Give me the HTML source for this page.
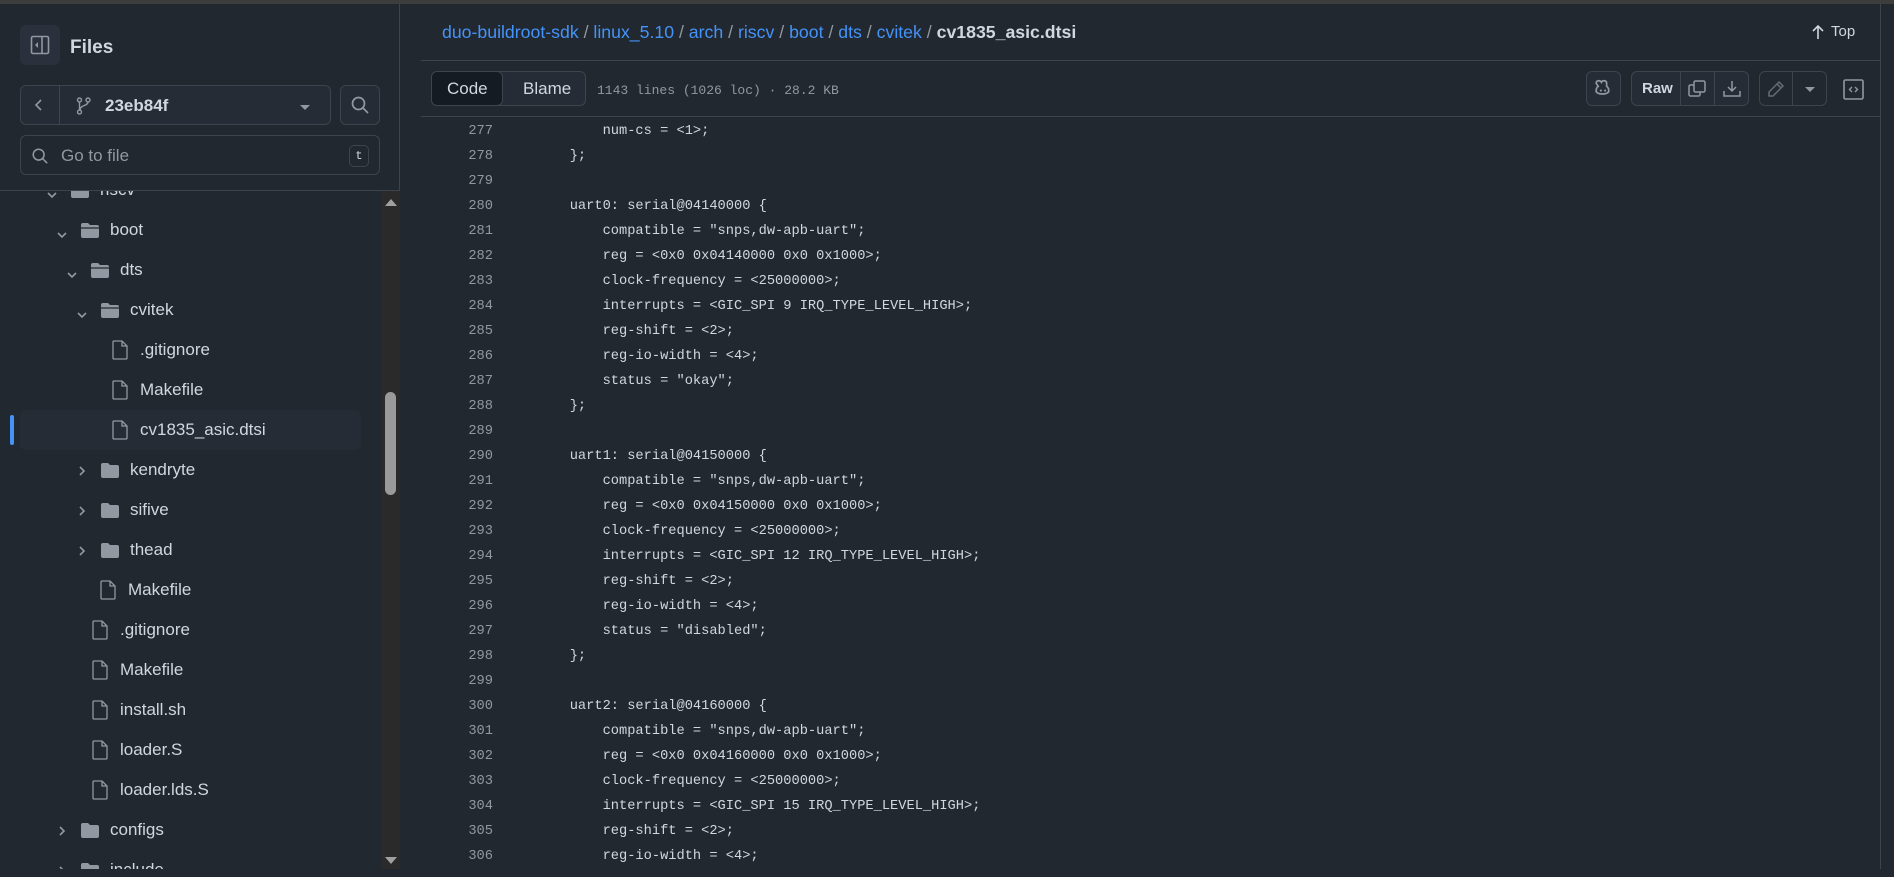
<!DOCTYPE html>
<html><head><meta charset="utf-8"><style>
*{box-sizing:border-box;margin:0;padding:0}
body{width:1894px;height:869px;overflow:hidden;background:#212830;font-family:"Liberation Sans",sans-serif;color:#d1d7e0;position:relative}
.topbar{position:absolute;left:0;top:0;width:1894px;height:4px;background:#3d3d3d}
.side{position:absolute;left:0;top:4px;width:400px;height:865px;background:#212830;border-right:1px solid #3d444d}
.abs{position:absolute}
.btn{position:absolute;border:1px solid #3d444d;border-radius:6px;background:#262c36}
.row{position:absolute;height:38px;font-size:17px;line-height:38px;color:#d1d7e0;white-space:nowrap}
.main{position:absolute;left:421px;top:4px;width:1459px;height:865px;background:#212830}
.code{position:absolute;left:0;font-family:"Liberation Mono",monospace;font-size:13.7px;white-space:pre;color:#d1d7e0}
.ln{position:absolute;width:72px;text-align:right;color:#9198a1;left:0}
.tx{position:absolute;left:83px}
.right{position:absolute;left:1880px;top:4px;width:14px;height:865px;background:#212830;border-left:1px solid #3d444d}
</style></head><body>
<div class="topbar"></div>
<div class="side">
 <div class="btn" style="left:20px;top:21px;width:40px;height:40px;border:none;background:#2a313c"></div>
 <svg class="abs" style="left:30px;top:31px" width="20" height="20" viewBox="0 0 20 20"><rect x="1.5" y="1.5" width="17" height="17" rx="1.5" fill="none" stroke="#9198a1" stroke-width="1.6"/><line x1="12" y1="2" x2="12" y2="18" stroke="#9198a1" stroke-width="1.6"/><path d="M8 7l-3 3 3 3z" fill="#9198a1"/></svg>
 <div class="abs" style="left:70px;top:33px;font-size:19px;font-weight:bold;color:#d1d7e0">Files</div>
 <div class="btn" style="left:20px;top:81px;width:311px;height:40px"></div>
 <div class="abs" style="left:59px;top:82px;width:1px;height:38px;background:#3d444d"></div>
 <svg class="abs" style="left:33px;top:94px" width="12" height="14" viewBox="0 0 12 14"><path d="M8 2L3 7l5 5" fill="none" stroke="#9198a1" stroke-width="1.6"/></svg>
 <svg class="abs" style="left:76px;top:93px" width="16" height="18" viewBox="0 0 16 18"><circle cx="3.5" cy="3" r="2" fill="none" stroke="#9198a1" stroke-width="1.4"/><circle cx="3.5" cy="15" r="2" fill="none" stroke="#9198a1" stroke-width="1.4"/><circle cx="12" cy="3" r="2" fill="none" stroke="#9198a1" stroke-width="1.4"/><path d="M3.5 5v8M12 5c0 4-8 3-8 8" fill="none" stroke="#9198a1" stroke-width="1.4"/></svg>
 <div class="abs" style="left:105px;top:92px;font-size:17px;font-weight:bold;color:#d1d7e0">23eb84f</div>
 <svg class="abs" style="left:299px;top:100px" width="12" height="8"><path d="M1 1h10L6 6z" fill="#9198a1"/></svg>
 <div class="btn" style="left:340px;top:81px;width:40px;height:40px"></div>
 <svg class="abs" style="left:350px;top:91px" width="20" height="20" viewBox="0 0 20 20"><circle cx="8.5" cy="8.5" r="6" fill="none" stroke="#9198a1" stroke-width="1.7"/><path d="M13 13l5 5" stroke="#9198a1" stroke-width="1.7"/></svg>
 <div class="btn" style="left:20px;top:131px;width:360px;height:40px;background:#212830"></div>
 <svg class="abs" style="left:31px;top:143px" width="18" height="18" viewBox="0 0 20 20"><circle cx="8.5" cy="8.5" r="6" fill="none" stroke="#9198a1" stroke-width="1.7"/><path d="M13 13l5 5" stroke="#9198a1" stroke-width="1.7"/></svg>
 <div class="abs" style="left:61px;top:142px;font-size:17px;color:#9198a1">Go to file</div>
 <div class="abs" style="left:349px;top:141px;width:20px;height:22px;border:1px solid #3d444d;border-radius:5px;font-family:'Liberation Mono',monospace;font-size:12px;text-align:center;line-height:20px;color:#d1d7e0">t</div>
 <div class="abs" style="left:0;top:186px;width:400px;height:1px;background:#3d444d"></div>
 <div class="abs" style="left:0;top:187px;width:381px;height:678px;overflow:hidden" id="tree"></div>
 <div class="abs" style="left:381px;top:187px;width:19px;height:678px;background:#2a2a2a"></div>
 <svg class="abs" style="left:384px;top:193px" width="14" height="10"><path d="M1 9h12L7 2z" fill="#a0a0a0"/></svg>
 <svg class="abs" style="left:384px;top:852px" width="14" height="10"><path d="M1 1h12L7 8z" fill="#a0a0a0"/></svg>
 <div class="abs" style="left:385px;top:388px;width:11px;height:103px;border-radius:6px;background:#9a9a9a"></div>
</div>
<div class="main">
 <div class="abs" style="left:21px;top:18px;font-size:17.7px;color:#4493f8;white-space:nowrap">duo-buildroot-sdk <span style="color:#9198a1">/</span> linux_5.10 <span style="color:#9198a1">/</span> arch <span style="color:#9198a1">/</span> riscv <span style="color:#9198a1">/</span> boot <span style="color:#9198a1">/</span> dts <span style="color:#9198a1">/</span> cvitek <span style="color:#9198a1">/</span> <b style="color:#d1d7e0">cv1835_asic.dtsi</b></div>
 <svg class="abs" style="left:1390px;top:20px" width="14" height="16" viewBox="0 0 14 16"><path d="M7 15V2M2 7l5-5 5 5" fill="none" stroke="#d1d7e0" stroke-width="1.6"/></svg>
 <div class="abs" style="left:1410px;top:19px;font-size:15px;color:#d1d7e0">Top</div>
 <div class="abs" style="left:0;top:56px;width:1459px;height:1px;background:#3d444d"></div>
 <div class="abs" style="left:10px;top:67px;width:155px;height:35px;border:1px solid #3d444d;border-radius:6px;background:#262c36"></div>
 <div class="abs" style="left:10px;top:67px;width:72px;height:35px;border-radius:6px;background:#151b23;border:1px solid #3d444d"></div>
 <div class="abs" style="left:26px;top:75px;font-size:17px;color:#d1d7e0">Code</div>
 <div class="abs" style="left:102px;top:75px;font-size:17px;color:#d1d7e0">Blame</div>
 <div class="abs" style="left:176px;top:79px;font-family:'Liberation Mono',monospace;font-size:13px;color:#9198a1">1143 lines (1026 loc) · 28.2 KB</div>
 <div class="btn" style="left:1165px;top:67px;width:35px;height:35px"></div>
 <svg class="abs" style="left:1172px;top:74px" width="21" height="21" viewBox="0 0 20 20"><path d="M4 5c0-3 4-3 5-1 1-2 5-2 5 1v3c2 1 2 3 2 5-2 3-10 3-12 0 0-2 0-4 2-5z" fill="none" stroke="#9198a1" stroke-width="1.6" transform="translate(-1 0)"/><circle cx="7.5" cy="12" r="1" fill="#9198a1"/><circle cx="11.5" cy="12" r="1" fill="#9198a1"/></svg>
 <div class="btn" style="left:1210px;top:67px;width:118px;height:35px"></div>
 <div class="abs" style="left:1259px;top:68px;width:1px;height:33px;background:#3d444d"></div>
 <div class="abs" style="left:1293px;top:68px;width:1px;height:33px;background:#3d444d"></div>
 <div class="abs" style="left:1221px;top:76px;font-size:15px;font-weight:bold;color:#d1d7e0">Raw</div>
 <svg class="abs" style="left:1267px;top:76px" width="18" height="18" viewBox="0 0 18 18"><rect x="1" y="5" width="11" height="11" rx="1.5" fill="none" stroke="#9198a1" stroke-width="1.5"/><rect x="6" y="1" width="11" height="11" rx="1.5" fill="#262c36" stroke="#9198a1" stroke-width="1.5"/></svg>
 <svg class="abs" style="left:1302px;top:76px" width="18" height="18" viewBox="0 0 18 18"><path d="M9 1v10M5 7l4 4 4-4M1 11v5h16v-5" fill="none" stroke="#9198a1" stroke-width="1.5"/></svg>
 <div class="btn" style="left:1338px;top:67px;width:68px;height:35px;background:#212830"></div>
 <div class="abs" style="left:1371px;top:68px;width:1px;height:33px;background:#3d444d"></div>
 <svg class="abs" style="left:1346px;top:76px" width="18" height="18" viewBox="0 0 18 18"><path d="M12 2l4 4-10 10H2v-4z M10 4l4 4" fill="none" stroke="#656c76" stroke-width="1.5"/></svg>
 <svg class="abs" style="left:1383px;top:82px" width="12" height="8"><path d="M1 1h10L6 6z" fill="#9198a1"/></svg>
 <svg class="abs" style="left:1422px;top:75px" width="21" height="21" viewBox="0 0 21 21"><rect x="1" y="1" width="19" height="19" rx="1.5" fill="none" stroke="#9198a1" stroke-width="1.6"/><path d="M9 8l-2.5 2.5L9 13M12 8l2.5 2.5L12 13" fill="none" stroke="#9198a1" stroke-width="1.4"/></svg>
 <div class="abs" style="left:0;top:112px;width:1459px;height:1px;background:#3d444d"></div>
 <div class="code" id="code" style="top:113px;width:1459px;height:760px"></div>
</div>
<div class="right"></div>
<script>
var lines=[
"            num-cs = <1>;","        };","","        uart0: serial@04140000 {",
"            compatible = \"snps,dw-apb-uart\";","            reg = <0x0 0x04140000 0x0 0x1000>;","            clock-frequency = <25000000>;","            interrupts = <GIC_SPI 9 IRQ_TYPE_LEVEL_HIGH>;","            reg-shift = <2>;","            reg-io-width = <4>;","            status = \"okay\";","        };","",
"        uart1: serial@04150000 {",
"            compatible = \"snps,dw-apb-uart\";","            reg = <0x0 0x04150000 0x0 0x1000>;","            clock-frequency = <25000000>;","            interrupts = <GIC_SPI 12 IRQ_TYPE_LEVEL_HIGH>;","            reg-shift = <2>;","            reg-io-width = <4>;","            status = \"disabled\";","        };","",
"        uart2: serial@04160000 {",
"            compatible = \"snps,dw-apb-uart\";","            reg = <0x0 0x04160000 0x0 0x1000>;","            clock-frequency = <25000000>;","            interrupts = <GIC_SPI 15 IRQ_TYPE_LEVEL_HIGH>;","            reg-shift = <2>;","            reg-io-width = <4>;"];
var h="";
lines.forEach(function(l,i){var y=7+i*25;h+='<div class="ln" style="top:'+y+'px">'+(277+i)+'</div><div class="tx" style="top:'+y+'px">'+l.replace(/&/g,'&amp;').replace(/</g,'&lt;').replace(/>/g,'&gt;')+'</div>';});
document.getElementById('code').innerHTML=h;
var folder='<svg width="20" height="17" viewBox="0 0 20 17"><path d="M1 3a2 2 0 0 1 2-2h5l2 2h7a2 2 0 0 1 2 2v9a2 2 0 0 1-2 2H3a2 2 0 0 1-2-2z" fill="#9198a1"/></svg>';
var open='<svg width="20" height="17" viewBox="0 0 20 17"><path d="M1 3a2 2 0 0 1 2-2h5l2 2h7a2 2 0 0 1 2 2v9a2 2 0 0 1-2 2H3a2 2 0 0 1-2-2z" fill="#9198a1"/><path d="M1 6h18" stroke="#212830" stroke-width="1.2"/></svg>';
var file='<svg width="16" height="20" viewBox="0 0 16 20"><path d="M2 1h8l5 5v12a1 1 0 0 1-1 1H2a1 1 0 0 1-1-1V2a1 1 0 0 1 1-1zM10 1v5h5" fill="none" stroke="#9198a1" stroke-width="1.3"/></svg>';
var down='<svg width="12" height="8" viewBox="0 0 12 8"><path d="M2 2l4 4 4-4" fill="none" stroke="#9198a1" stroke-width="1.6"/></svg>';
var right='<svg width="8" height="12" viewBox="0 0 8 12"><path d="M2 2l4 4-4 4" fill="none" stroke="#9198a1" stroke-width="1.6"/></svg>';
var items=[["d",70,"riscv"],["d",80,"boot"],["d",90,"dts"],["d",100,"cvitek"],["f",112,".gitignore"],["f",112,"Makefile"],["f",112,"cv1835_asic.dtsi"],["r",100,"kendryte"],["r",100,"sifive"],["r",100,"thead"],["f",100,"Makefile"],["f",92,".gitignore"],["f",92,"Makefile"],["f",92,"install.sh"],["f",92,"loader.S"],["f",92,"loader.lds.S"],["r",80,"configs"],["r",80,"include"]];
var t="";
items.forEach(function(it,i){var y=-21+i*40;
 if(i==6){t+='<div style="position:absolute;left:20px;top:'+(y)+'px;width:341px;height:40px;border-radius:6px;background:#262c36"></div><div style="position:absolute;left:10px;top:'+(y+5)+'px;width:4px;height:30px;border-radius:2px;background:#4493f8"></div>';}
 var ic,tx;
 if(it[0]=="f"){ic='<div style="position:absolute;left:'+it[1]+'px;top:'+(y+10)+'px">'+file+'</div>';tx=it[1]+28;}
 else{var cx=it[1]-24;ic='<div style="position:absolute;left:'+(it[0]=="d"?cx:cx+2)+'px;top:'+(y+(it[0]=="d"?16:14))+'px">'+(it[0]=="d"?down:right)+'</div><div style="position:absolute;left:'+it[1]+'px;top:'+(y+12)+'px">'+(it[0]=="d"?open:folder)+'</div>';tx=it[1]+30;}
 t+=ic+'<div class="row" style="left:'+tx+'px;top:'+(y+1)+'px">'+it[2]+'</div>';});
document.getElementById('tree').innerHTML=t;
</script>
</body></html>
